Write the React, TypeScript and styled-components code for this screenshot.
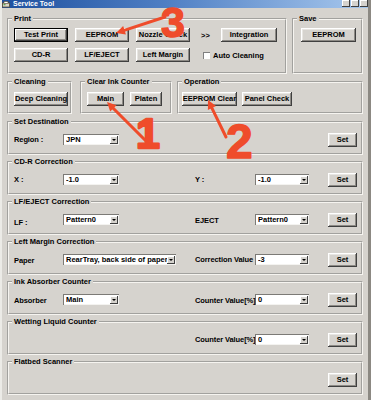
import React from "react";
import styled, { createGlobalStyle, css } from "styled-components";

const GlobalStyle = createGlobalStyle`
  html, body {
    margin: 0;
    padding: 0;
    background: #d6d3ce;
  }
  body {
    font-family: "Liberation Sans", Arial, sans-serif;
  }
`;

const FONT = `"Liberation Sans", Arial, sans-serif`;
const FACE = "#d6d3ce";
const RED = "#ef4c2b";

const Window = styled.div`
  position: relative;
  width: 371px;
  height: 400px;
  overflow: hidden;
  box-sizing: border-box;
  background: ${FACE};
  border-left: 2px solid #ecebe7;
  border-right: 3px solid #8c8983;
  font: bold 7.5px/9px ${FONT};
  color: #000;
`;

const TitleBar = styled.div`
  height: 8px;
  margin: 0 -3px 0 -2px;
  display: flex;
  align-items: center;
  gap: 3px;
  padding: 0 3px 0 2px;
  overflow: hidden;
  background: linear-gradient(to right, #1d4f9e, #4f7fc4 45%, #a9c9ee);
`;

const TitleText = styled.span`
  flex: 1;
  color: #fff;
  font: bold 7px/8px ${FONT};
  white-space: nowrap;
`;

const Controls = styled.div`
  display: flex;
  gap: 1px;
  align-self: flex-start;
`;

const ControlBox = styled.span`
  width: 8px;
  height: 7px;
  background: ${FACE};
  box-shadow: inset -1px -1px #404040, inset 1px 1px #fff;
`;

const Content = styled.div`
  display: flex;
  flex-direction: column;
  gap: 3px;
  padding: 6px 5px 0 5px;
`;

const Row = styled.div`
  display: flex;
`;

const Sections = styled.div`
  display: flex;
  flex-direction: column;
  gap: 2px;
`;

const Group = styled.fieldset<{ $w?: number; $h: number; $pl: number; $ml?: number }>`
  box-sizing: border-box;
  margin: 0 0 0 ${(p) => p.$ml ?? 0}px;
  min-width: 0;
  width: ${(p) => (p.$w ? `${p.$w}px` : "auto")};
  height: ${(p) => p.$h}px;
  padding: 0 0 0 ${(p) => p.$pl}px;
  border: 2px groove #f6f4f0;
`;

const Legend = styled.legend<{ $pl: number }>`
  padding: 0 2px;
  margin-left: ${(p) => 3 - p.$pl}px;
  font: bold 7.5px/9px ${FONT};
  white-space: nowrap;
`;

const Button = styled.button<{ $w: number; $default?: boolean }>`
  box-sizing: border-box;
  width: ${(p) => p.$w}px;
  height: 14px;
  margin: 0;
  padding: 0;
  border: none;
  background: ${FACE};
  font: bold 7.5px/1 ${FONT};
  color: #000;
  white-space: nowrap;
  overflow: hidden;
  box-shadow: inset -1px -1px #404040, inset 1px 1px #fff,
    inset -2px -2px #8d8a85, inset 2px 2px #e8e6e2;
  ${(p) =>
    p.$default &&
    css`
      box-shadow: inset 0 0 0 1px #000, inset -2px -2px #404040,
        inset 2px 2px #fff, inset -3px -3px #8d8a85;
    `}
`;

const PrintGrid = styled.div`
  display: grid;
  grid-template-columns: 54px 54px 54px 17px 56px;
  grid-auto-rows: 14px;
  column-gap: 7px;
  row-gap: 6px;
  padding-top: 5px;
`;

const Chevrons = styled.span`
  display: flex;
  align-items: center;
  justify-content: center;
`;

const CheckCell = styled.label`
  grid-column: 4 / span 2;
  display: flex;
  align-items: center;
  gap: 3px;
  padding-left: 6px;
  white-space: nowrap;
`;

const CheckBox = styled.span`
  width: 7px;
  height: 7px;
  background: #fff;
  box-shadow: inset 1px 1px #808080, inset -1px -1px #fff;
`;

const ButtonLine = styled.div<{ $gap: number }>`
  display: flex;
  align-items: center;
  gap: ${(p) => p.$gap}px;
  height: 26px;
`;

const FieldRow = styled.div`
  display: grid;
  grid-template-columns: 49px 132px 60px 73px 29px;
  align-items: center;
  height: 27px;
`;

const FieldLabel = styled.span<{ $col: number; $dy?: number }>`
  grid-column: ${(p) => p.$col};
  white-space: nowrap;
  letter-spacing: -0.1px;
  ${(p) => p.$dy && css`transform: translateY(${p.$dy}px);`}
`;

const Combo = styled.div<{ $w: number; $col: number }>`
  grid-column: ${(p) => p.$col};
  box-sizing: border-box;
  width: ${(p) => p.$w}px;
  height: 11px;
  display: flex;
  align-items: center;
  padding: 0 1px 0 3px;
  background: #fff;
  box-shadow: inset 1px 1px #7c7a76, inset -1px -1px #f4f3f0;
`;

const ComboText = styled.span`
  flex: 1;
  overflow: hidden;
  white-space: nowrap;
  line-height: 9px;
`;

const ComboArrow = styled.span`
  width: 8px;
  height: 8px;
  display: flex;
  align-items: center;
  justify-content: center;
  background: ${FACE};
  box-shadow: inset -1px -1px #404040, inset 1px 1px #fff;

  &::after {
    content: "";
    border-left: 2px solid transparent;
    border-right: 2px solid transparent;
    border-top: 2px solid #000;
  }
`;

const SetCell = styled.div`
  grid-column: 5;
  display: flex;
`;

const Overlay = styled.svg`
  position: absolute;
  left: -2px;
  top: 0;
  pointer-events: none;
`;

const Mark = styled.text`
  fill: ${RED};
  stroke: ${RED};
  stroke-linejoin: round;
  font-family: ${FONT};
  font-weight: bold;
`;

function Select({ value, width, col }: { value: string; width: number; col: number }) {
  return (
    <Combo $w={width} $col={col}>
      <ComboText>{value}</ComboText>
      <ComboArrow />
    </Combo>
  );
}

function Arrow({ x1, y1, x2, y2 }: { x1: number; y1: number; x2: number; y2: number }) {
  const len = Math.hypot(x2 - x1, y2 - y1);
  const ux = (x2 - x1) / len;
  const uy = (y2 - y1) / len;
  const head = 9;
  const half = 4.5;
  const bx = x2 - ux * head;
  const by = y2 - uy * head;
  const pts = `${x2},${y2} ${bx - uy * half},${by + ux * half} ${bx + uy * half},${by - ux * half}`;
  return (
    <g>
      <line x1={x1} y1={y1} x2={bx + ux * 2} y2={by + uy * 2} stroke={RED} strokeWidth={3} strokeLinecap="round" />
      <polygon points={pts} fill={RED} />
    </g>
  );
}

type Field = { label: string; value: string; width: number; dy?: number };

function Section({ title, left, right }: { title: string; left?: Field; right?: Field }) {
  return (
    <Group $h={38} $pl={5}>
      <Legend $pl={5}>{title}</Legend>
      <FieldRow>
        {left && (
          <>
            <FieldLabel $col={1} $dy={left.dy}>{left.label}</FieldLabel>
            <Select value={left.value} width={left.width} col={2} />
          </>
        )}
        {right && (
          <>
            <FieldLabel $col={3} $dy={right.dy}>{right.label}</FieldLabel>
            <Select value={right.value} width={right.width} col={4} />
          </>
        )}
        <SetCell>
          <Button $w={29}>Set</Button>
        </SetCell>
      </FieldRow>
    </Group>
  );
}

export default function App() {
  return (
    <>
      <GlobalStyle />
      <Window>
        <TitleBar>
          <svg width="8" height="7" viewBox="0 0 8 7">
            <rect x="0.5" y="2" width="7" height="4" fill="#d8d4c8" stroke="#5a4a30" strokeWidth="0.8" />
            <rect x="2" y="0.5" width="4" height="2" fill="#fff" stroke="#5a4a30" strokeWidth="0.6" />
            <rect x="1.5" y="3.2" width="2" height="1" fill="#3a9a3a" />
          </svg>
          <TitleText>Service Tool</TitleText>
          <Controls>
            <ControlBox />
            <ControlBox />
            <ControlBox />
          </Controls>
        </TitleBar>

        <Content>
          <Row>
            <Group $w={280} $h={60} $pl={5}>
              <Legend $pl={5}>Print</Legend>
              <PrintGrid>
                <Button $w={54} $default>Test Print</Button>
                <Button $w={54}>EEPROM</Button>
                <Button $w={54}>Nozzle Check</Button>
                <Chevrons>&gt;&gt;</Chevrons>
                <Button $w={56}>Integration</Button>
                <Button $w={54}>CD-R</Button>
                <Button $w={54}>LF/EJECT</Button>
                <Button $w={54}>Left Margin</Button>
                <CheckCell>
                  <CheckBox />
                  Auto Cleaning
                </CheckCell>
              </PrintGrid>
            </Group>
            <Group $w={71} $h={60} $pl={7} $ml={5}>
              <Legend $pl={7}>Save</Legend>
              <PrintGrid>
                <Button $w={55}>EEPROM</Button>
              </PrintGrid>
            </Group>
          </Row>

          <Row>
            <Group $w={65} $h={37} $pl={5}>
              <Legend $pl={5}>Cleaning</Legend>
              <ButtonLine $gap={0}>
                <Button $w={54}>Deep Cleaning</Button>
              </ButtonLine>
            </Group>
            <Group $w={92} $h={37} $pl={5} $ml={8}>
              <Legend $pl={5}>Clear Ink Counter</Legend>
              <ButtonLine $gap={6}>
                <Button $w={37}>Main</Button>
                <Button $w={32}>Platen</Button>
              </ButtonLine>
            </Group>
            <Group $w={186} $h={37} $pl={3} $ml={5}>
              <Legend $pl={3}>Operation</Legend>
              <ButtonLine $gap={5}>
                <Button $w={55}>EEPROM Clear</Button>
                <Button $w={50}>Panel Check</Button>
              </ButtonLine>
            </Group>
          </Row>

          <Sections>
            <Section title="Set Destination" left={{ label: "Region :", value: "JPN", width: 56 }} />
            <Section
              title="CD-R Correction"
              left={{ label: "X :", value: "-1.0", width: 56 }}
              right={{ label: "Y :", value: "-1.0", width: 54 }}
            />
            <Section
              title="LF/EJECT Correction"
              left={{ label: "LF :", value: "Pattern0", width: 56, dy: 3 }}
              right={{ label: "EJECT", value: "Pattern0", width: 54, dy: 1 }}
            />
            <Section
              title="Left Margin Correction"
              left={{ label: "Paper", value: "RearTray, back side of paper", width: 113, dy: 1 }}
              right={{ label: "Correction Value", value: "-3", width: 54 }}
            />
            <Section
              title="Ink Absorber Counter"
              left={{ label: "Absorber", value: "Main", width: 56, dy: 1 }}
              right={{ label: "Counter Value[%]", value: "0", width: 54, dy: 1 }}
            />
            <Section title="Wetting Liquid Counter" right={{ label: "Counter Value[%]", value: "0", width: 54 }} />
            <Section title="Flatbed Scanner" />
          </Sections>
        </Content>

        <Overlay width={371} height={400} viewBox="0 0 371 400">
          <Arrow x1={165} y1={17} x2={116} y2={33} />
          <Mark x={161} y={37} fontSize={43} strokeWidth={1.4}>3</Mark>
          <Arrow x1={146} y1={141} x2={107} y2={102} />
          <Mark x={136} y={148} fontSize={43} strokeWidth={2.4}>1</Mark>
          <Arrow x1={226} y1={137} x2={208} y2={100} />
          <Mark x={226} y={158} fontSize={48} strokeWidth={1.4}>2</Mark>
        </Overlay>
      </Window>
    </>
  );
}
